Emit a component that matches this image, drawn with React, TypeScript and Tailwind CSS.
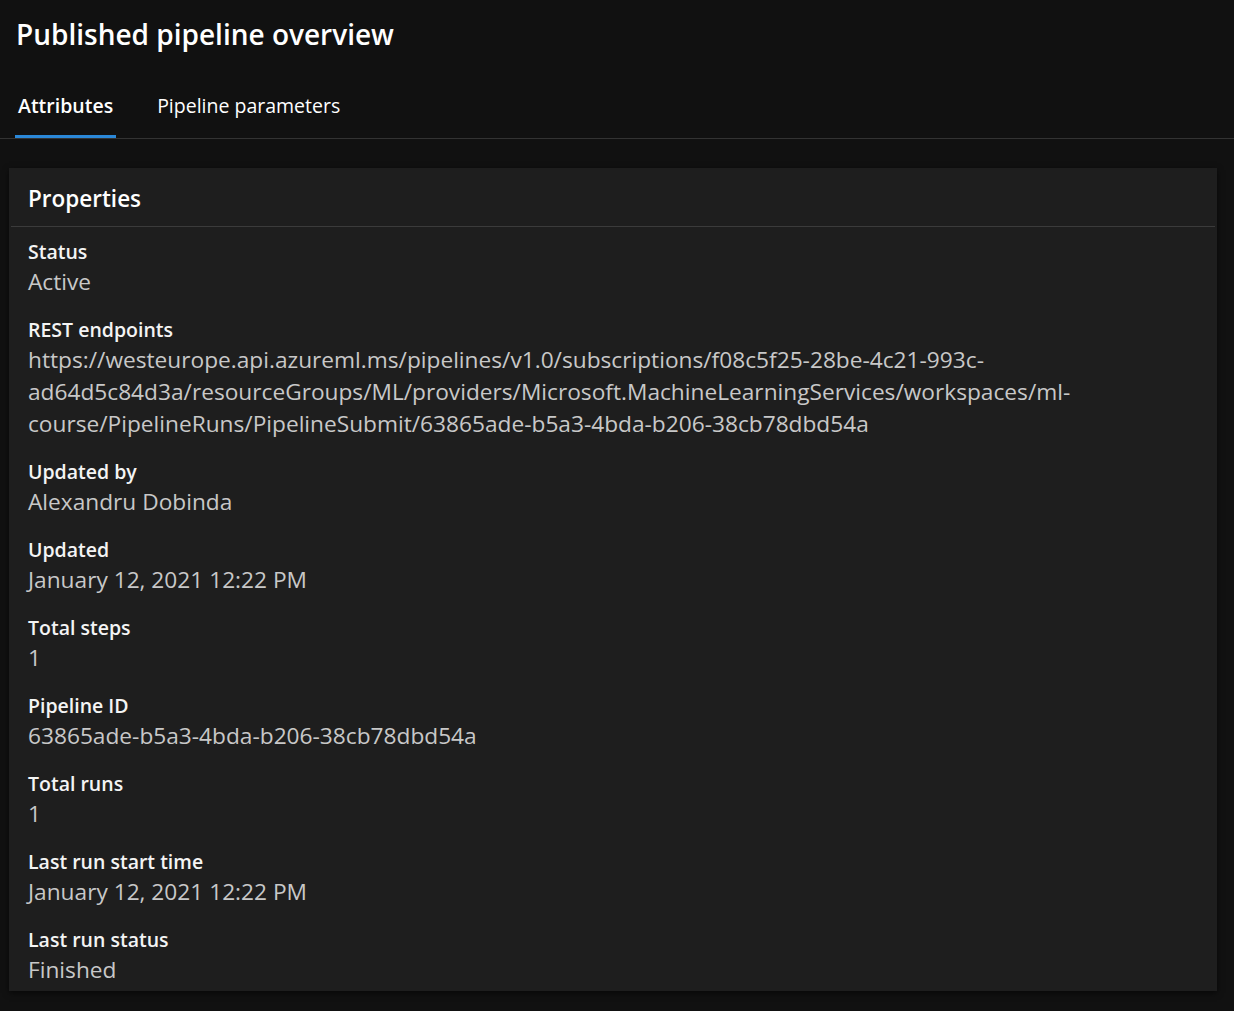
const rows: { label: string; value: string[] }[] = [
  { label: "Status", value: ["Active"] },
  {
    label: "REST endpoints",
    value: [
      "https://westeurope.api.azureml.ms/pipelines/v1.0/subscriptions/f08c5f25-28be-4c21-993c-",
      "ad64d5c84d3a/resourceGroups/ML/providers/Microsoft.MachineLearningServices/workspaces/ml-",
      "course/PipelineRuns/PipelineSubmit/63865ade-b5a3-4bda-b206-38cb78dbd54a",
    ],
  },
  { label: "Updated by", value: ["Alexandru Dobinda"] },
  { label: "Updated", value: ["January 12, 2021 12:22 PM"] },
  { label: "Total steps", value: ["1"] },
  { label: "Pipeline ID", value: ["63865ade-b5a3-4bda-b206-38cb78dbd54a"] },
  { label: "Total runs", value: ["1"] },
  { label: "Last run start time", value: ["January 12, 2021 12:22 PM"] },
  { label: "Last run status", value: ["Finished"] },
];

export default function App() {
  return (
    <div className="min-h-[1011px] bg-[#111111] font-['Segoe_UI','Open_Sans',sans-serif] text-white">
      {/* Header */}
      <h1 className="px-4 pt-[14px] text-[28px] font-semibold leading-[40px]">
        Published pipeline overview
      </h1>

      {/* Tabs */}
      <div className="mt-[39px] flex border-b border-[#333333] pl-[15px]">
        <div className="border-b-[3px] border-[#2b88d8] px-[3px] pb-[16px] text-[19.5px] font-semibold leading-[26px]">
          Attributes
        </div>
        <div className="ml-[41px] pb-[19px] text-[19.5px] leading-[26px]">
          Pipeline parameters
        </div>
      </div>

      {/* Properties card */}
      <div className="mx-[9px] mt-[29px] w-[1208px] bg-[#1e1e1e] pb-[5px] shadow-[0_2px_6px_rgba(0,0,0,0.6)]">
        <div className="flex h-[58px] items-center px-[19px] pt-[4px] text-[22.5px] font-semibold">
          Properties
        </div>
        <div className="mx-[2px] h-px bg-[#3b3b3b]" />
        <div className="px-[19px] pt-[11px]">
          {rows.map((row, i) => (
            <div key={i} className={i < rows.length - 1 ? "mb-[18px]" : ""}>
              <div className="text-[19.5px] font-semibold leading-[28px] text-[#f4f4f4]">
                {row.label}
              </div>
              {row.value.map((line, j) => (
                <div key={j} className="whitespace-nowrap text-[22.7px] leading-[32px] text-[#c8c8c8]">
                  {line}
                </div>
              ))}
            </div>
          ))}
        </div>
      </div>
    </div>
  );
}
